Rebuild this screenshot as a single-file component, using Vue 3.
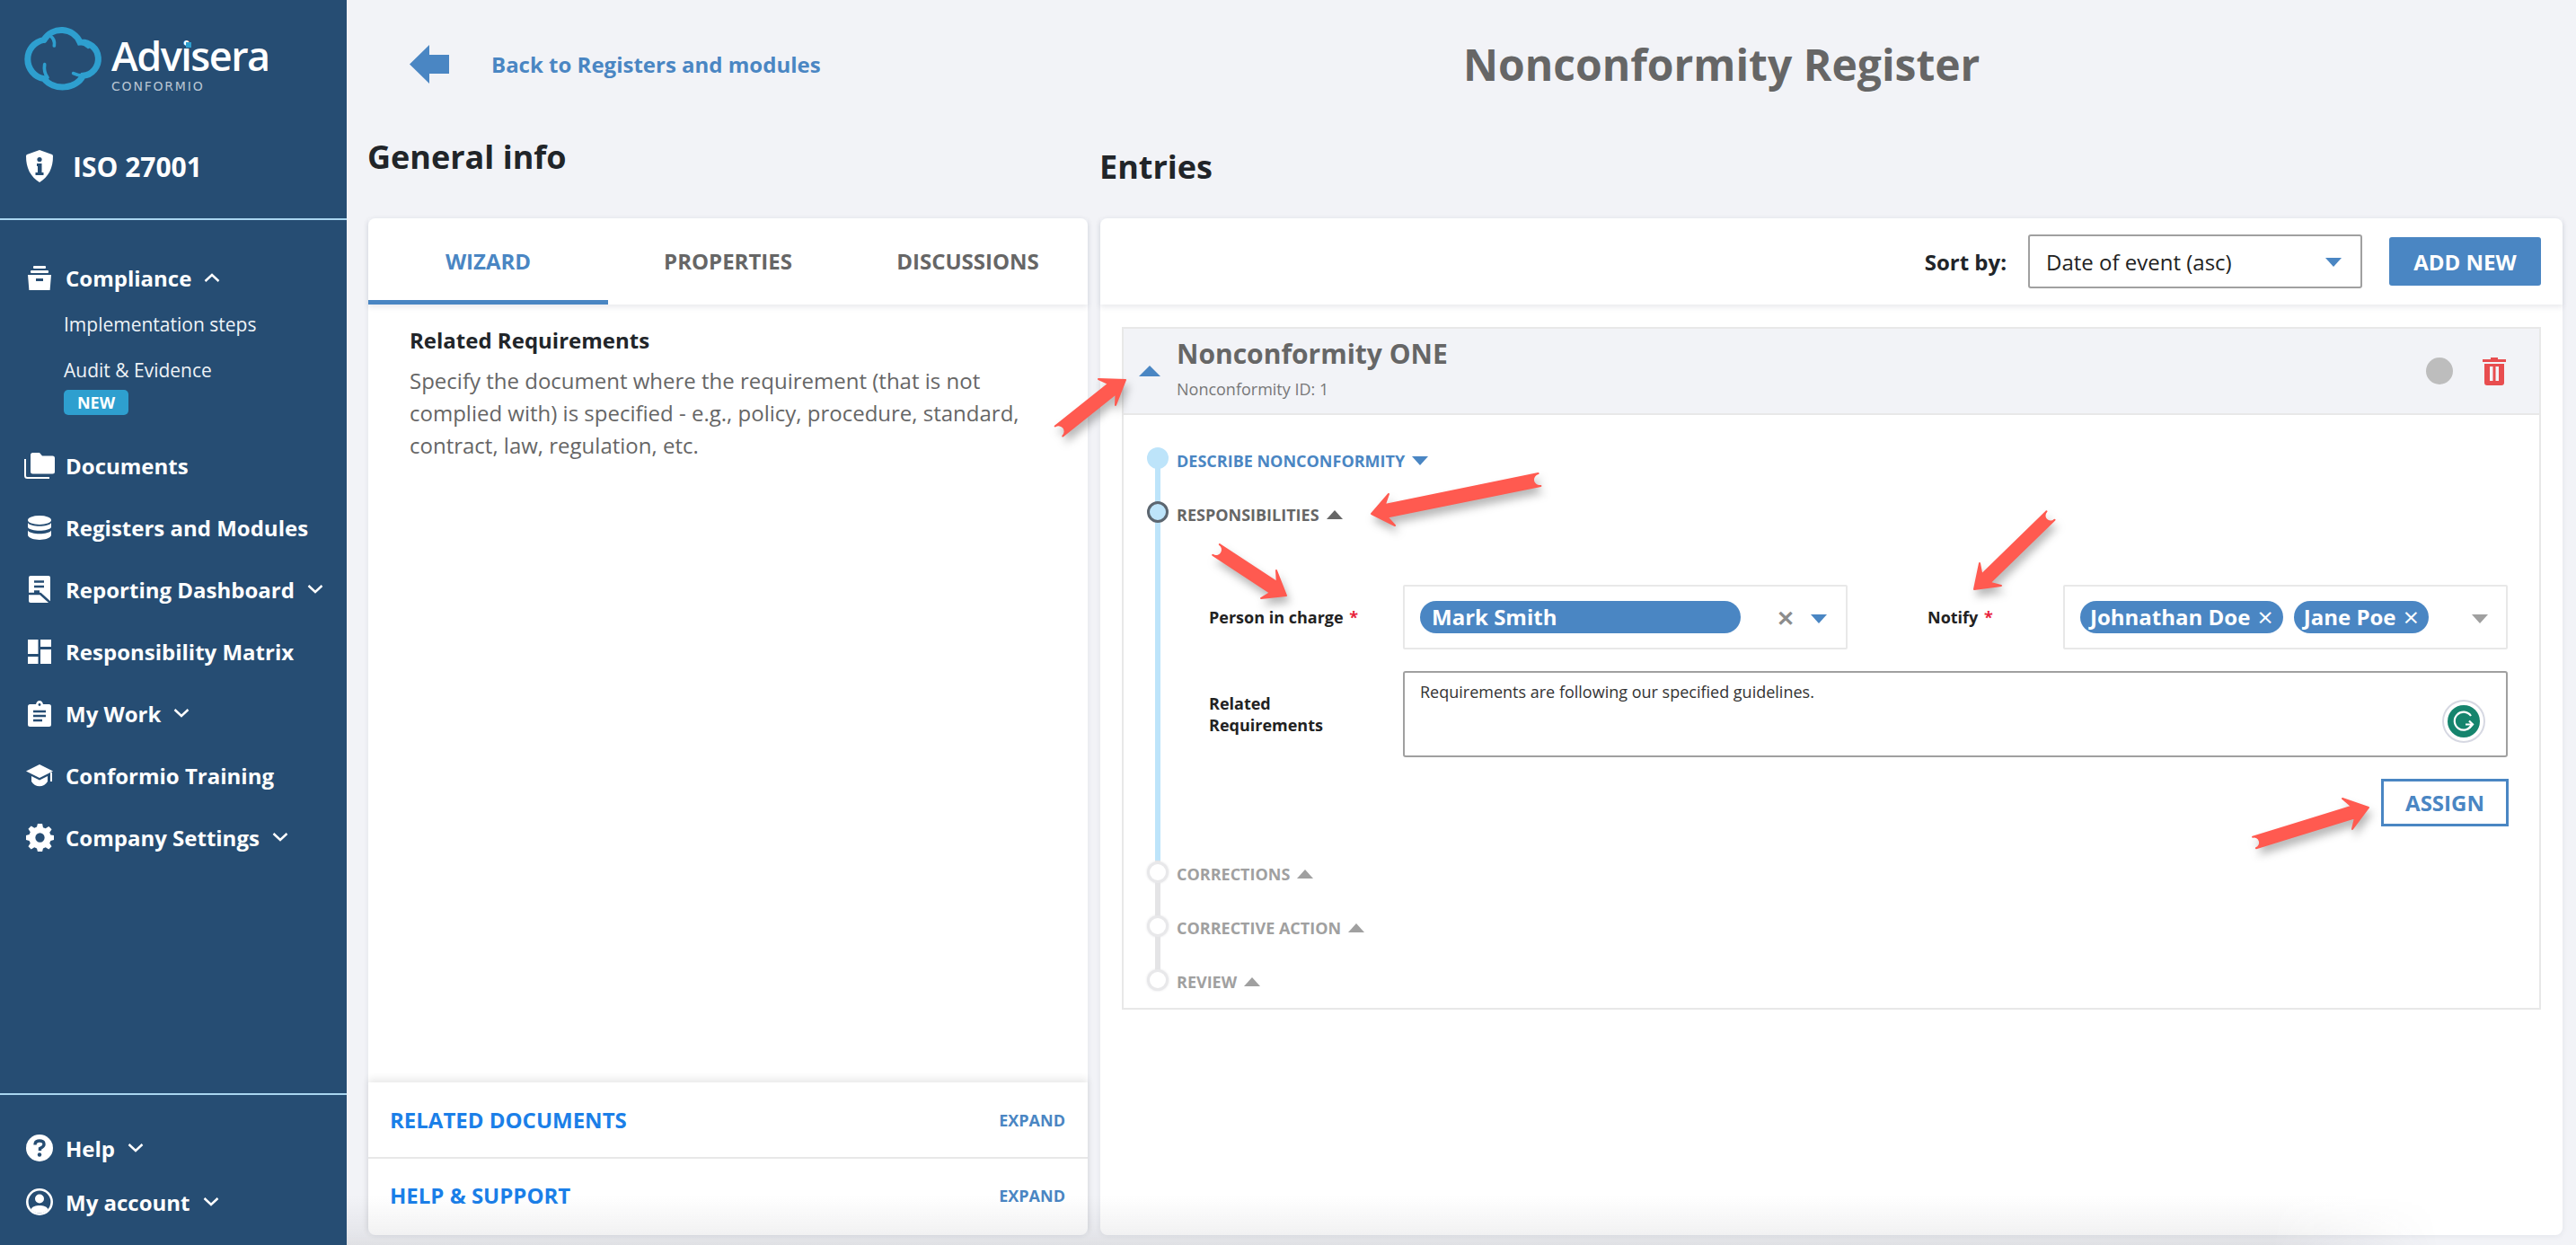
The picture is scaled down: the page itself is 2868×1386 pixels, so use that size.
<script setup>
const navItems = [
  { label: 'Documents', icon: 'folder' },
  { label: 'Registers and Modules', icon: 'db' },
  { label: 'Reporting Dashboard', icon: 'report', chevron: true },
  { label: 'Responsibility Matrix', icon: 'matrix' },
  { label: 'My Work', icon: 'clip', chevron: true },
  { label: 'Conformio Training', icon: 'cap' },
  { label: 'Company Settings', icon: 'gear', chevron: true },
]
const tabs = ['WIZARD', 'PROPERTIES', 'DISCUSSIONS']
const laterSteps = ['CORRECTIONS', 'CORRECTIVE ACTION', 'REVIEW']

function arrowPath(tail, tip, b1, b2, w) {
  const dx = tip[0] - tail[0], dy = tip[1] - tail[1]
  const len = Math.hypot(dx, dy)
  const ux = dx / len, uy = dy / len
  const nx = -uy, ny = ux
  const mid = [(b1[0] + b2[0]) / 2, (b1[1] + b2[1]) / 2]
  const neck = [mid[0] + (tip[0] - mid[0]) * 0.28, mid[1] + (tip[1] - mid[1]) * 0.28]
  const r = w
  const a = [tail[0] + nx * r, tail[1] + ny * r]
  const b = [neck[0] + nx * w, neck[1] + ny * w]
  const c = [neck[0] - nx * w, neck[1] - ny * w]
  const d = [tail[0] - nx * r, tail[1] - ny * r]
  const side = (b1[0] - tail[0]) * nx + (b1[1] - tail[1]) * ny > 0
  const p1 = side ? b1 : b2
  const p2 = side ? b2 : b1
  const f = (p) => p[0].toFixed(1) + ' ' + p[1].toFixed(1)
  return `M${f(a)} L${f(b)} L${f(p1)} L${f(tip)} L${f(p2)} L${f(c)} L${f(d)} A${r} ${r} 0 0 1 ${f(a)} Z`
}
const arrows = [
  arrowPath([1179, 480], [1253, 423], [1223, 422], [1242, 451], 7),
  arrowPath([1714, 534], [1527, 572], [1546, 550], [1553, 585], 7),
  arrowPath([1354, 612], [1432, 663], [1421, 635], [1404, 666], 7),
  arrowPath([2283, 574], [2198, 656], [2204, 627], [2228, 652], 6.5),
  arrowPath([2510, 938], [2637, 899], [2608, 889], [2619, 923], 6.5),
]
</script>

<template>
  <div class="app">
    <aside class="sidebar">
      <div class="logo">
        <svg class="cloud" viewBox="70 80 285 225" fill="none" stroke="#2e9fcf" stroke-width="21" stroke-linecap="round">
          <path d="M148 132 A68 68 0 0 1 268 140 A56 56 0 0 1 278 252 A74 62 0 0 1 148 262 A66 66 0 0 1 148 132" />
          <path d="M168 118 Q186 130 182 152" stroke-width="11" />
          <path d="M268 140 Q284 146 296 156" stroke-width="11" />
          <path d="M150 214 Q146 240 160 258" stroke-width="11" />
          <path d="M278 252 Q262 252 246 244" stroke-width="11" />
        </svg>
        <div class="wordmark">
          <div class="brand">Advisera<span class="brand-dot"></span></div>
          <div class="product">CONFORMIO</div>
        </div>
      </div>

      <div class="standard">
        <svg class="ico-shield" viewBox="0 0 30 36">
          <path fill="#fff" d="M15 0 L29 5 Q30 5.5 30 7 C30 20 25 30 15 36 C5 30 0 20 0 7 Q0 5.5 1 5 Z" />
          <circle cx="15" cy="10.5" r="2.6" fill="#264d73" />
          <path fill="#264d73" d="M12 15 h5.5 v10 h2 v3 h-9 v-3 h2.5 v-7 h-1 z" />
        </svg>
        <span>ISO 27001</span>
      </div>

      <nav class="nav">
        <div class="nav-item">
          <span class="nav-icon">
            <svg viewBox="0 0 26 27" width="26" height="27" fill="#fff">
              <rect x="6" y="0" width="14" height="3" rx="1" />
              <rect x="3" y="5" width="20" height="3" rx="1" />
              <path fill-rule="evenodd" d="M0 10 H26 L24.6 27 H1.4 Z M9 14 v3 h8 v-3 z" />
            </svg>
          </span>
          <span>Compliance</span>
          <svg class="chev up" viewBox="0 0 18 10"><path d="M1.5 9 L9 2 L16.5 9" /></svg>
        </div>
        <div class="sub-item first">Implementation steps</div>
        <div class="sub-item">Audit &amp; Evidence</div>
        <div class="badge">NEW</div>

        <div v-for="item in navItems" :key="item.label" class="nav-item">
          <span class="nav-icon">
            <svg v-if="item.icon === 'folder'" viewBox="0 0 34 29" width="34" height="29">
              <path fill="#fff" d="M7 2.5 Q7 0 9.5 0 H17 L20 3.5 H31.5 Q34 3.5 34 6 V21 Q34 23.5 31.5 23.5 H9.5 Q7 23.5 7 21 Z" />
              <path fill="none" stroke="#fff" stroke-width="2" d="M1 7 V25.5 Q1 28 3.5 28 H28" />
            </svg>
            <svg v-else-if="item.icon === 'db'" viewBox="0 0 26 27" width="26" height="27" fill="#fff">
              <ellipse cx="13" cy="5" rx="13" ry="5" />
              <path d="M0 8 C3 13 23 13 26 8 V13 C23 18 3 18 0 13 Z" />
              <path d="M0 16.5 C3 21.5 23 21.5 26 16.5 V22 C23 28.5 3 28.5 0 22 Z" />
            </svg>
            <svg v-else-if="item.icon === 'report'" viewBox="0 0 24 30" width="24" height="30">
              <path fill="#fff" d="M2 0 H22 Q24 0 24 2 V28 Q24 30 22 30 H2 Q0 30 0 28 V2 Q0 0 2 0 Z" />
              <path fill="none" stroke="#264d73" stroke-width="2.6" d="M6 6.5 H17 M6 12 H17 M6 17.5 H12 M0 20 H13 L24 30" />
            </svg>
            <svg v-else-if="item.icon === 'matrix'" viewBox="0 0 26 27" width="26" height="27" fill="#fff">
              <rect x="0" y="0" width="11.5" height="16" />
              <rect x="0" y="19" width="11.5" height="8" />
              <rect x="14" y="0" width="12" height="8" />
              <rect x="14" y="11" width="12" height="16" />
            </svg>
            <svg v-else-if="item.icon === 'clip'" viewBox="0 0 26 29" width="26" height="29">
              <path fill="#fff" d="M2.5 4 H9 Q10 0 13 0 Q16 0 17 4 H23.5 Q26 4 26 6.5 V26.5 Q26 29 23.5 29 H2.5 Q0 29 0 26.5 V6.5 Q0 4 2.5 4 Z" />
              <path stroke="#264d73" stroke-width="2.4" d="M6 12 H20 M6 17 H20 M6 22 H16" />
              <circle cx="13" cy="4.5" r="1.4" fill="#264d73" />
            </svg>
            <svg v-else-if="item.icon === 'cap'" viewBox="0 0 30 25" width="30" height="25" fill="#fff">
              <path d="M15 0 L30 7.5 L15 15 L0 7.5 Z" />
              <path d="M6 13 L15 17.5 L24 13 V19 C20 26 10 26 6 19 Z" />
              <rect x="27" y="9" width="2" height="10" />
            </svg>
            <svg v-else viewBox="0 0 24 24" width="31" height="31" fill="#fff">
              <path fill-rule="evenodd" d="M10 0 H14 L14.7 3.2 L16.8 4.1 L19.6 2.3 L22.1 4.9 L20.3 7.6 L21.2 9.7 L24 10 V14 L21.2 14.7 L20.3 16.8 L22.1 19.6 L19.6 22.1 L16.8 20.3 L14.7 21.2 L14 24 H10 L9.3 21.2 L7.2 20.3 L4.4 22.1 L1.9 19.6 L3.7 16.8 L2.8 14.7 L0 14 V10 L2.8 9.3 L3.7 7.2 L1.9 4.4 L4.4 1.9 L7.2 3.7 L9.3 2.8 Z M12 8 A4 4 0 1 0 12 16 A4 4 0 1 0 12 8 Z" />
            </svg>
          </span>
          <span>{{ item.label }}</span>
          <svg v-if="item.chevron" class="chev" viewBox="0 0 18 10"><path d="M1.5 1 L9 8 L16.5 1" /></svg>
        </div>
      </nav>

      <div class="account">
        <div class="nav-item">
          <span class="nav-icon">
            <svg viewBox="0 0 30 30" width="30" height="30">
              <circle cx="15" cy="15" r="15" fill="#fff" />
              <path fill="none" stroke="#264d73" stroke-width="3.4" d="M10 11.5 Q10 7 15 7 Q20 7 20 11 Q20 13.5 15.5 15.5 V18" />
              <circle cx="15" cy="22.5" r="2.2" fill="#264d73" />
            </svg>
          </span>
          <span>Help</span>
          <svg class="chev" viewBox="0 0 18 10"><path d="M1.5 1 L9 8 L16.5 1" /></svg>
        </div>
        <div class="nav-item">
          <span class="nav-icon">
            <svg viewBox="0 0 30 30" width="30" height="30">
              <circle cx="15" cy="15" r="13.7" fill="none" stroke="#fff" stroke-width="2.6" />
              <circle cx="15" cy="11.5" r="5" fill="#fff" />
              <path fill="#fff" d="M5.5 23 C8 17.5 22 17.5 24.5 23 C21 29 9 29 5.5 23 Z" />
            </svg>
          </span>
          <span>My account</span>
          <svg class="chev" viewBox="0 0 18 10"><path d="M1.5 1 L9 8 L16.5 1" /></svg>
        </div>
      </div>
    </aside>

    <main class="main">
      <header class="topbar">
        <div class="back">
          <svg class="back-arrow" viewBox="0 0 44 43"><path fill="#4a86c3" d="M22 0 V11 H44 V32 H22 V43 L0 21.5 Z" /></svg>
          <span>Back to Registers and modules</span>
        </div>
        <h1 class="page-title">Nonconformity Register</h1>
      </header>

      <div class="columns">
        <section class="col-left">
          <h2 class="heading general">General info</h2>
          <div class="card left-card">
            <div class="tabs">
              <div v-for="(t, i) in tabs" :key="t" class="tab" :class="{ active: i === 0 }">{{ t }}</div>
            </div>
            <div class="help-body">
              <div class="help-title">Related Requirements</div>
              <p class="help-text">Specify the document where the requirement (that is not complied with) is specified - e.g., policy, procedure, standard, contract, law, regulation, etc.</p>
            </div>
            <div class="accordion">
              <div class="acc-row"><span class="acc-title">RELATED DOCUMENTS</span><span class="acc-expand">EXPAND</span></div>
              <div class="acc-row"><span class="acc-title">HELP &amp; SUPPORT</span><span class="acc-expand">EXPAND</span></div>
            </div>
          </div>
        </section>

        <section class="col-right">
          <h2 class="heading entries">Entries</h2>
          <div class="card right-card">
            <div class="toolbar">
              <span class="sort-label">Sort by:</span>
              <div class="select">
                <span>Date of event (asc)</span>
                <i class="tri down blue"></i>
              </div>
              <button class="add-new">ADD NEW</button>
            </div>

            <div class="entry">
              <div class="entry-head">
                <i class="tri up blue big"></i>
                <div class="entry-titles">
                  <div class="entry-title">Nonconformity ONE</div>
                  <div class="entry-id">Nonconformity ID: 1</div>
                </div>
                <span class="status-dot"></span>
                <svg class="trash" viewBox="0 0 26 31">
                  <path fill="#e84d4f" fill-rule="evenodd" d="M9 0 H17 V2 H26 V5 H0 V2 H9 Z M2 7 H24 V28 Q24 31 21 31 H5 Q2 31 2 28 Z M8 10 V26 H11.5 V10 Z M14.5 10 V26 H18 V10 Z" />
                </svg>
              </div>

              <div class="steps">
                <div class="step step-done">
                  <span class="dot dot-done"></span>
                  <span class="step-label link">DESCRIBE NONCONFORMITY</span>
                  <i class="tri down blue"></i>
                </div>
                <div class="step step-current">
                  <span class="dot dot-current"></span>
                  <span class="step-label">RESPONSIBILITIES</span>
                  <i class="tri up dark"></i>
                </div>

                <div class="form">
                  <div class="form-row">
                    <label class="field-label person">Person in charge <em>*</em></label>
                    <div class="field person-field">
                      <span class="pill wide">Mark Smith</span>
                      <span class="clear">✕</span>
                      <i class="tri down blue"></i>
                    </div>
                    <label class="field-label notify">Notify <em>*</em></label>
                    <div class="field notify-field">
                      <span class="pill">Johnathan Doe <b>×</b></span>
                      <span class="pill">Jane Poe <b>×</b></span>
                      <i class="tri down grey"></i>
                    </div>
                  </div>
                  <div class="form-row area-row">
                    <label class="field-label">Related<br />Requirements</label>
                    <div class="textarea">
                      Requirements are following our specified guidelines.
                      <span class="grammarly">
                        <svg viewBox="0 0 36 36" width="36" height="36">
                          <circle cx="18" cy="18" r="18" fill="#15846d" />
                          <path fill="none" stroke="#fff" stroke-width="2.2" d="M26 12 A10 10 0 1 0 27 21.5 H20" />
                          <path fill="none" stroke="#fff" stroke-width="2.2" d="M24 17.5 L28 21.5 L24 25.5" />
                        </svg>
                      </span>
                    </div>
                  </div>
                  <div class="assign-row"><button class="assign">ASSIGN</button></div>
                </div>

                <div v-for="s in laterSteps" :key="s" class="step step-later">
                  <span class="dot dot-later"></span>
                  <span class="step-label muted">{{ s }}</span>
                  <i class="tri up grey"></i>
                </div>
              </div>
            </div>
          </div>
        </section>
      </div>
    </main>

    <div class="bottom-fade"></div>

    <svg class="annotations" viewBox="0 0 2868 1386" width="2868" height="1386">
      <path v-for="(d, i) in arrows" :key="i" :d="d" fill="#ff5a50" stroke="#ff5a50" stroke-width="2" stroke-linejoin="round" />
    </svg>
  </div>
</template>

<style>
html, body { margin: 0; padding: 0; background: #f2f3f7; }
</style>

<style scoped>
.app {
  position: relative;
  display: flex;
  width: 2868px;
  height: 1386px;
  overflow: hidden;
  background: #f2f3f7;
  font-family: "Open Sans", "Noto Sans", sans-serif;
  color: #212529;
}

/* sidebar */
.sidebar {
  width: 386px;
  flex: none;
  display: flex;
  flex-direction: column;
  background: #264d73;
  color: #fff;
}
.logo {
  display: flex;
  align-items: flex-start;
  height: 130px;
  padding: 27px 0 0 23px;
  box-sizing: border-box;
}
.cloud { width: 95px; height: 75px; flex: none; }
.wordmark { margin-left: 6px; }
.brand {
  position: relative;
  font-size: 45px;
  line-height: 44px;
  margin-top: 13px;
  font-weight: 600;
  letter-spacing: -1.5px;
  color: #fff;
}
.brand-dot {
  position: absolute;
  left: 83px;
  top: 7px;
  width: 6px;
  height: 6px;
  background: #2e9fcf;
}
.product {
  font-family: "DejaVu Sans", "Open Sans", sans-serif;
  font-size: 14px;
  line-height: 14px;
  letter-spacing: 1.8px;
  color: #b9c6d3;
  margin-top: 5px;
}
.standard {
  height: 115px;
  box-sizing: border-box;
  display: flex;
  align-items: center;
  padding: 0 0 3px 29px;
  border-bottom: 2px solid #a9d6f0;
  font-size: 30px;
  font-weight: 700;
}
.ico-shield { width: 30px; height: 36px; margin-right: 22px; }
.nav { padding-top: 47px; flex: 1; }
.nav-item {
  display: flex;
  align-items: center;
  height: 34px;
  font-size: 24px;
  font-weight: 700;
  white-space: nowrap;
  margin-bottom: 35px;
}
.nav-icon {
  width: 62px;
  margin-left: 11px;
  flex: none;
  display: flex;
  justify-content: center;
  box-sizing: border-box;
  transform: translateX(2px);
}
.chev { width: 18px; height: 10px; margin-left: 14px; flex: none; }
.chev path { fill: none; stroke: #fff; stroke-width: 2.4; }
.sub-item {
  margin: 0 0 17px 71px;
  font-size: 21px;
  line-height: 34px;
  height: 34px;
  color: #eef3f7;
}
.sub-item.first { margin-top: -17px; }
.badge {
  width: 72px;
  height: 28px;
  margin: -12px 0 39px 71px;
  border-radius: 5px;
  background: #2e9fcf;
  font-size: 18px;
  font-weight: 700;
  line-height: 28px;
  text-align: center;
}
.account {
  border-top: 2px solid #a9d6f0;
  padding-top: 42px;
  height: 169px;
  box-sizing: border-box;
}
.account .nav-item { margin-bottom: 26px; }

/* main */
.main { flex: 1; min-width: 0; display: flex; flex-direction: column; }
.topbar {
  position: relative;
  height: 145px;
  flex: none;
  display: flex;
  align-items: flex-start;
}
.back {
  display: flex;
  align-items: center;
  gap: 47px;
  padding: 50px 0 0 70px;
  color: #4a86c3;
  font-size: 24px;
  font-weight: 700;
}
.back-arrow { width: 44px; height: 43px; }
.page-title {
  margin: 40px 0 0 0;
  position: absolute;
  left: 1243px;
  font-size: 48px;
  line-height: 64px;
  font-weight: 700;
  color: #666;
}
.columns { flex: 1; display: flex; gap: 14px; padding: 0 15px 11px 24px; min-height: 0; }
.col-left { width: 801px; flex: none; display: flex; flex-direction: column; }
.col-right { flex: 1; display: flex; flex-direction: column; }
.heading { margin: 0 0 0 -1px; font-weight: 700; font-size: 36px; line-height: 50px; color: #212529; }
.general { padding: 5px 0 43px; }
.entries { padding: 16px 0 32px; }
.card {
  flex: 1;
  min-height: 0;
  background: #fff;
  border-radius: 8px;
  box-shadow: 0 1px 6px rgba(40, 50, 80, .08);
  display: flex;
  flex-direction: column;
}

/* left card */
.tabs {
  display: flex;
  height: 96px;
  flex: none;
  box-shadow: 0 3px 6px rgba(40, 50, 80, .1);
}
.tab {
  flex: 1;
  display: flex;
  align-items: center;
  justify-content: center;
  font-size: 24px;
  font-weight: 700;
  color: #666;
  box-sizing: border-box;
  padding-top: 3px;
  border-bottom: 5px solid transparent;
}
.tab.active { color: #4a86c3; border-bottom-color: #4a86c3; }
.help-body { flex: 1; padding: 22px 40px 0 46px; }
.help-title { font-size: 24px; font-weight: 700; line-height: 36px; color: #212529; }
.help-text { margin: 9px 0 0; font-size: 24px; line-height: 36px; color: #666; }
.accordion { box-shadow: 0 -4px 8px rgba(0, 0, 0, .09); height: 170px; flex: none; }
.acc-row {
  height: 83px;
  box-sizing: border-box;
  display: flex;
  align-items: center;
  justify-content: space-between;
  padding: 0 25px 0 24px;
}
.acc-row + .acc-row { border-top: 2px solid #e8e8e8; height: 87px; padding-bottom: 4px; }
.acc-title { font-size: 24px; font-weight: 700; color: #1b7fe8; }
.acc-expand { font-size: 18px; font-weight: 700; color: #4a86c3; }

/* right card */
.toolbar {
  display: flex;
  align-items: center;
  justify-content: flex-end;
  height: 96px;
  flex: none;
  padding-right: 24px;
  box-shadow: 0 3px 6px rgba(40, 50, 80, .1);
}
.sort-label { font-size: 24px; font-weight: 700; margin-right: 24px; }
.select {
  position: relative;
  width: 372px;
  height: 60px;
  box-sizing: border-box;
  border: 2px solid #a0a0a0;
  border-radius: 3px;
  display: flex;
  align-items: center;
  padding: 0 18px;
  font-size: 24px;
  color: #222;
  margin-right: 30px;
}
.select .tri { position: absolute; right: 21px; top: 24px; }
.add-new {
  width: 169px;
  height: 54px;
  border: 0;
  border-radius: 3px;
  background: #4a86c3;
  color: #fff;
  font: 700 24px "Open Sans", sans-serif;
}
.entry {
  margin: 25px 24px 0 24px;
  border: 2px solid #e8e8e8;
  height: 760px;
  box-sizing: border-box;
}
.entry-head {
  display: flex;
  align-items: center;
  height: 94px;
  background: #f2f3f7;
  border-bottom: 2px solid #e8e8e8;
  padding: 0 37px 0 17px;
}
.entry-titles { flex: 1; margin-left: 18px; margin-bottom: 6px; }
.entry-title { font-size: 30px; line-height: 40px; font-weight: 700; color: #666; }
.entry-id { font-size: 18px; line-height: 26px; margin-top: 6px; color: #777; }
.status-dot { width: 30px; height: 30px; border-radius: 50%; background: #bdbdbd; margin-right: 33px; }
.trash { width: 26px; height: 31px; }

/* triangles */
.tri { display: inline-block; width: 0; height: 0; border-left: 9px solid transparent; border-right: 9px solid transparent; flex: none; }
.tri.down { border-top: 10px solid; }
.tri.up { border-bottom: 10px solid; }
.tri.big { border-left-width: 12px; border-right-width: 12px; border-bottom-width: 12px; }
.tri.blue { color: #4a86c3; }
.tri.dark { color: #666; }
.tri.grey { color: #a0a0a0; }

/* steps */
.steps {
  position: relative;
  padding: 31px 0 0 59px;
}
.steps::before {
  content: "";
  position: absolute;
  left: 35px;
  top: 48px;
  width: 6px;
  height: 448px;
  background: #bde4fa;
}
.steps::after {
  content: "";
  position: absolute;
  left: 35px;
  top: 496px;
  width: 6px;
  height: 133px;
  background: #e4e4e6;
}
.step {
  position: relative;
  z-index: 1;
  display: flex;
  align-items: center;
  height: 60px;
  gap: 8px;
}
.dot {
  position: absolute;
  left: -33px;
  top: 5px;
  width: 24px;
  height: 24px;
  border-radius: 50%;
  box-sizing: border-box;
  background: #fff;
}
.dot-done { background: #bde4fa; }
.dot-current { background: #bde4fa; border: 3px solid #5c6670; }
.dot-later { background: #fff; box-shadow: 0 0 0 3px #e8e8ea, 0 0 3px 3px #e4e4e6; width: 18px; height: 18px; left: -30px; top: 9px; }
.step-label { font-size: 18px; font-weight: 700; color: #666; position: relative; top: -10px; }
.step .tri { position: relative; top: -10px; }
.step-label.link { color: #4a86c3; }
.step-label.muted { color: #a0a0a0; }
.form { margin: 38px 0 0 0; height: 302px; box-sizing: border-box; padding-right: 34px; }
.form-row { display: flex; align-items: center; }
.field-label { font-size: 18px; font-weight: 700; color: #222; line-height: 24px; }
.field-label em { color: #e8243c; font-style: normal; margin-left: 2px; }
.field-label:first-child { width: 252px; padding-left: 36px; box-sizing: border-box; flex: none; }
.notify { width: 151px; padding-left: 89px; flex: none; }
.field {
  height: 72px;
  box-sizing: border-box;
  border: 2px solid #e8e8e8;
  border-radius: 2px;
  display: flex;
  align-items: center;
  position: relative;
}
.person-field { width: 495px; padding-left: 17px; flex: none; }
.notify-field { width: 495px; padding-left: 17px; gap: 12px; flex: none; }
.pill {
  height: 36px;
  line-height: 36px;
  border-radius: 18px;
  background: #4a86c3;
  color: #fff;
  font-size: 24px;
  font-weight: 700;
  padding: 0 11px;
  white-space: nowrap;
}
.pill b { font-weight: 400; font-size: 30px; line-height: 30px; margin-left: 2px; vertical-align: -2px; }
.pill.wide { width: 357px; box-sizing: border-box; padding-left: 13px; }
.clear { margin-left: 40px; font-size: 24px; color: #8c8c8c; font-weight: 700; }
.person-field .tri { position: absolute; right: 21px; top: 31px; }
.notify-field .tri { position: absolute; right: 20px; top: 31px; }
.area-row { margin-top: 24px; }
.textarea {
  position: relative;
  width: 1230px;
  height: 96px;
  box-sizing: border-box;
  border: 2px solid #a0a0a0;
  border-radius: 3px;
  padding: 8px 17px;
  font-size: 18px;
  line-height: 26px;
  color: #333;
  flex: none;
}
.grammarly {
  position: absolute;
  right: 23px;
  top: 30px;
  width: 48px;
  height: 48px;
  border-radius: 50%;
  background: #fff;
  box-shadow: inset 0 0 0 2px #d6d8e2;
  display: flex;
  align-items: center;
  justify-content: center;
}
.assign-row { display: flex; justify-content: flex-end; margin-top: 24px; }
.assign {
  width: 142px;
  height: 53px;
  box-sizing: border-box;
  background: #fff;
  border: 3px solid #4a86c3;
  color: #4a86c3;
  font: 700 24px "Open Sans", sans-serif;
}

.bottom-fade {
  position: absolute;
  left: 386px;
  width: 2330px;
  bottom: 0;
  height: 55px;
  pointer-events: none;
  background: linear-gradient(to bottom, rgba(40, 40, 50, 0), rgba(40, 40, 50, .06) 75%, rgba(40, 40, 50, .09));
  -webkit-mask-image: linear-gradient(to right, #000 92%, transparent);
  mask-image: linear-gradient(to right, #000 92%, transparent);
}
.annotations {
  position: absolute;
  left: 0;
  top: 0;
  pointer-events: none;
  filter: drop-shadow(3px 7px 5px rgba(0, 0, 0, .28));
}
</style>
